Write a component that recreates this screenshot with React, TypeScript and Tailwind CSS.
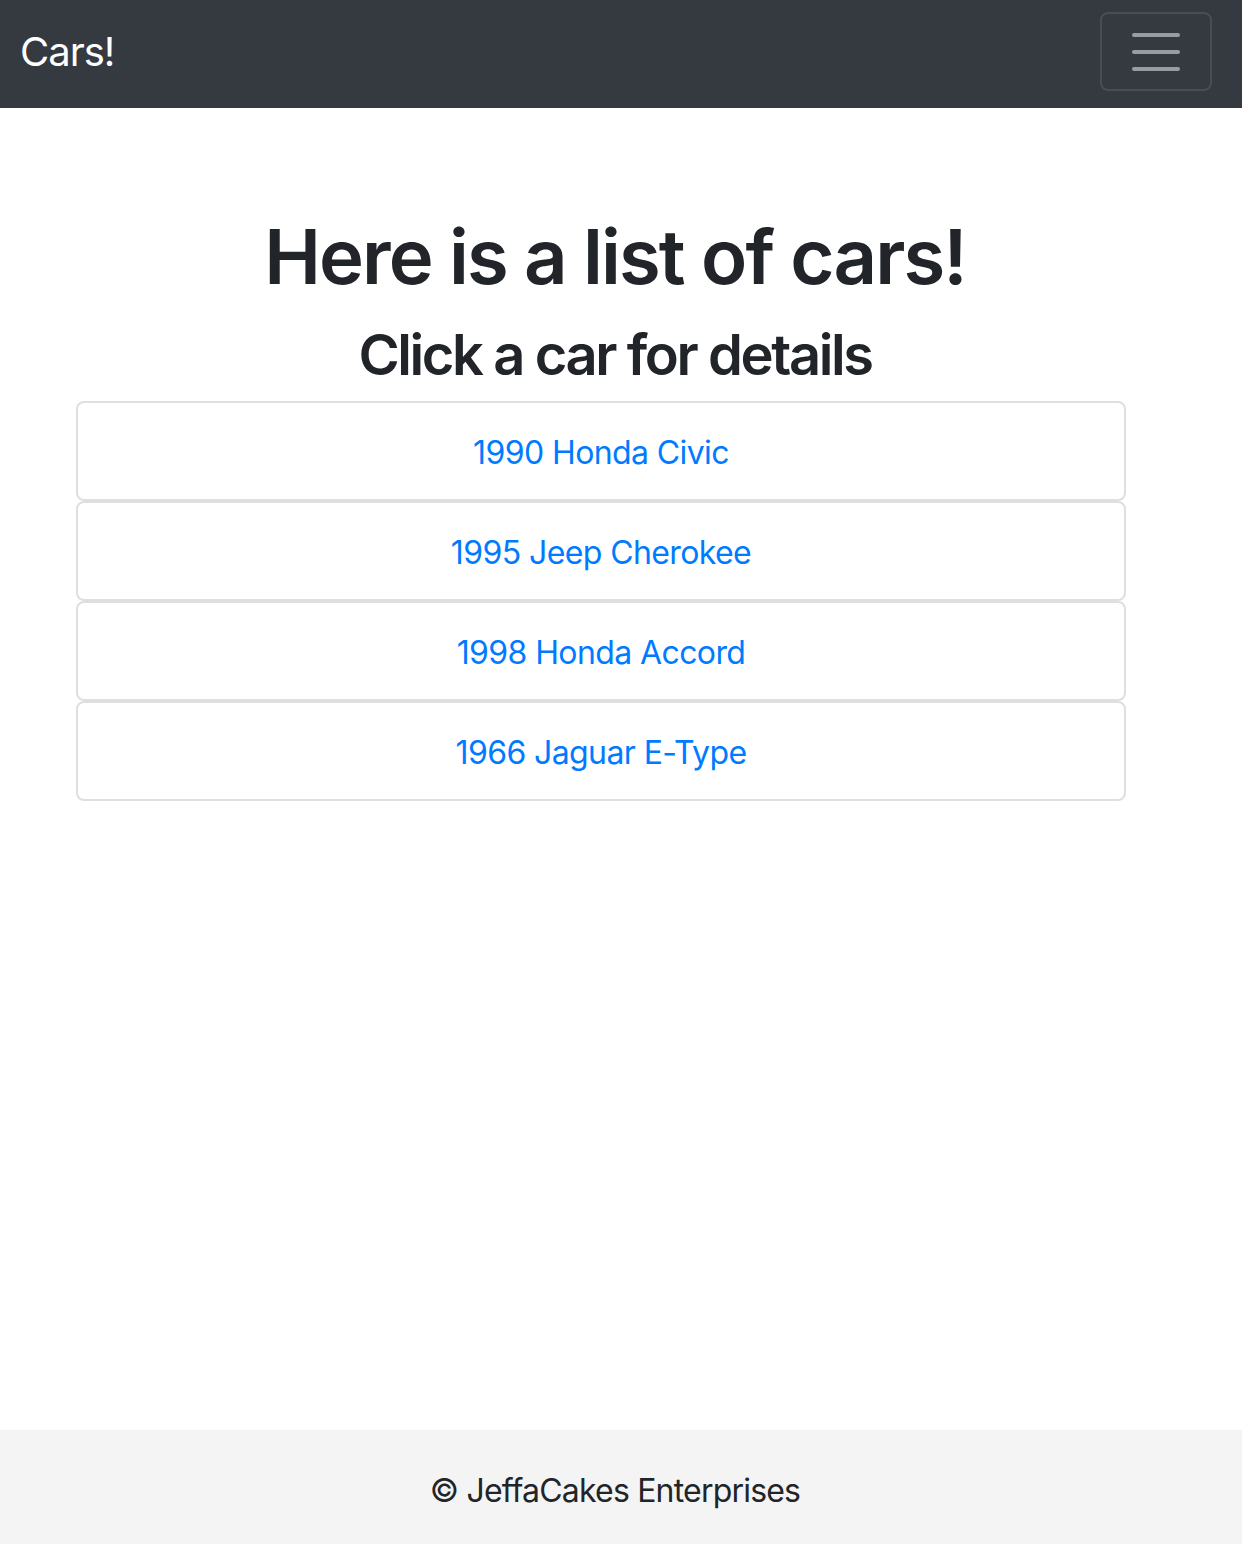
import React from 'react';

const cars = ['1990 Honda Civic', '1995 Jeep Cherokee', '1998 Honda Accord', '1966 Jaguar E-Type'];

export default function App() {
    return (
        <div
            className="min-h-[1544px] flex flex-col bg-white text-[#212529]"
            style={{ fontFamily: 'Inter, "Noto Sans", sans-serif' }}
        >
            <nav className="h-[108px] bg-[#343a40] flex items-start justify-between pl-[20px] pr-[30px] pt-[12px]">
                <a href="#" className="mt-[10px] text-white text-[40px] leading-[60px] tracking-[-1px]">Cars!</a>
                <button className="w-[112px] h-[79px] border-2 border-white/10 rounded-[8px] flex flex-col items-center justify-center gap-[13px]">
                    <span className="block w-[48px] h-[4px] rounded-full bg-[#9a9da0]" />
                    <span className="block w-[48px] h-[4px] rounded-full bg-[#9a9da0]" />
                    <span className="block w-[48px] h-[4px] rounded-full bg-[#9a9da0]" />
                </button>
            </nav>

            <main className="flex-1 pt-[100px]">
                <div className="pr-[12px]">
                    <h1 className="text-center text-[76px] leading-[96px] font-semibold tracking-[-1.9px]">
                        Here is a list of cars!
                    </h1>
                    <h2 className="text-center text-[56px] leading-[68px] font-semibold tracking-[-2.4px] mt-[17px] mb-[12px]">
                        Click a car for details
                    </h2>
                </div>
                <div className="ml-[76px] w-[1050px] flex flex-col">
                    {cars.map((car) => (
                        <a
                            key={car}
                            href="#"
                            className="h-[100px] pt-[4px] border-2 border-[#dfdfdf] rounded-[8px] flex items-center justify-center text-[32px] text-[#007bff] tracking-[-0.6px]"
                        >
                            {car}
                        </a>
                    ))}
                </div>
            </main>

            <footer className="h-[114px] pt-[8px] pr-[12px] bg-[#f4f4f4] flex items-center justify-center text-[32px] tracking-[-0.8px]">
                © JeffaCakes Enterprises
            </footer>
        </div>
    );
}
